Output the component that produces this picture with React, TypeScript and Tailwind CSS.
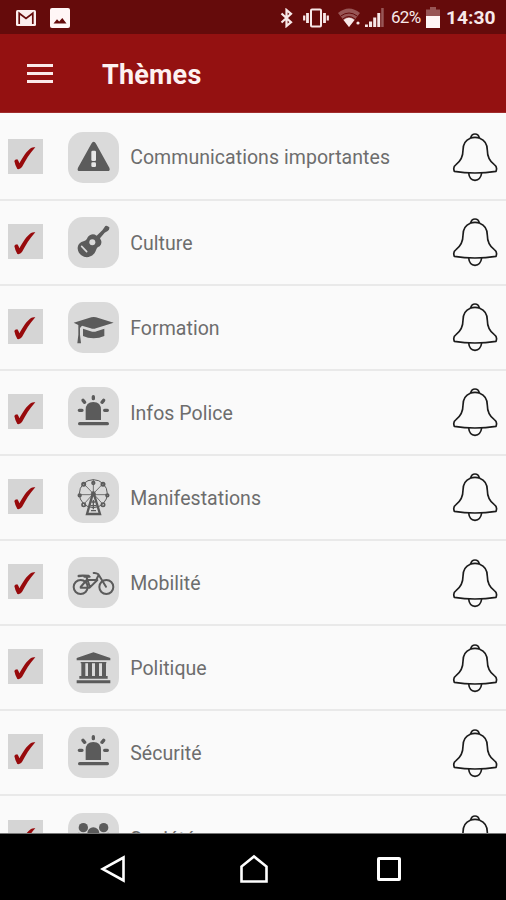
import type { ReactNode } from "react";
import { clsx } from "clsx";

function WarningIcon() {
  return (
    <>
      <path d="M77 29Q81 29 84 35L124 107Q128 117 119 117H35Q26 117 30 107L70 35Q73 29 77 29Z" />
      <rect x="70" y="56" width="14" height="31" rx="4" fill="#e6e6e6" />
      <rect x="70" y="91" width="14" height="14" rx="4" fill="#e6e6e6" />
    </>
  );
}

function GuitarIcon() {
  return (
    <>
      <path d="M112 27Q117 24 124 31Q125 39 119 42L110 47L96 64Q105 79 95 88C85 91 86 97 82 104C75 117 63 122 51 120C38 117 28 105 29 92C31 78 40 75 48 72C57 69 56 65 60 59C67 51 77 49 86 56L103 40Z" />
      <circle cx="73" cy="76" r="9" fill="#dadada" />
      <path d="M41 88L56 104" stroke="#dadada" strokeWidth="5" strokeLinecap="round" />
    </>
  );
}

function GraduationIcon() {
  return (
    <>
      <path d="M17 62L70 46Q77 44 84 46L137 62L84 79Q76 82 68 79L42 71L36 78V98L39 124H28L31 98V69Z" />
      <path d="M45 80L68 88Q77 91 86 88L109 80V102Q94 109 77 109Q59 109 45 102Z" />
    </>
  );
}

function SirenIcon() {
  return (
    <>
      <path d="M53 99V69Q53 45 76 45Q99 45 99 69V99Z" />
      <path
        d="M35 110H118M76 29V35M45 40L50 46M107 40L102 46M34 70H42M110 70H118"
        stroke="#5b5b5b"
        strokeWidth="10"
        strokeLinecap="round"
      />
    </>
  );
}

function FerrisWheelIcon() {
  return (
    <g fill="none" stroke="#5b5b5b" strokeWidth="3">
      <circle cx="76" cy="65" r="42" strokeWidth="3" />
      <path d="M76 22V65M34 68H118M46 34L76 65L106 34M48 96L76 65L104 96" strokeWidth="2.5" />
      <path d="M73 70L57 126H96L79 70Z" strokeWidth="7" />
      <path d="M67 101H85M70 90H82M69 116H84M76 84V112" strokeWidth="4" />
      <circle cx="76" cy="65" r="6" fill="#5b5b5b" />
      <g strokeWidth="5">
        <circle cx="76" cy="33" r="4" />
        <circle cx="47" cy="37" r="5" />
        <circle cx="105" cy="37" r="5" />
        <circle cx="35" cy="70" r="4" />
        <circle cx="118" cy="70" r="4" />
        <circle cx="47" cy="98" r="5" />
        <circle cx="105" cy="98" r="5" />
      </g>
    </g>
  );
}

function BikeIcon() {
  return (
    <g fill="none" stroke="#5b5b5b" strokeWidth="6" strokeLinecap="round" strokeLinejoin="round">
      <circle cx="38" cy="90" r="21" />
      <circle cx="115" cy="90" r="21" />
      <path d="M38 90L56 69H88L65 92H38M56 62L66 91M49 59H65M114 89L91 52Q85 47 77 48M92 54L86 66" />
      <path d="M32 57Q42 55 62 57" strokeWidth="7" />
    </g>
  );
}

function BuildingIcon() {
  return (
    <>
      <path d="M26 48L72 32Q76 30 81 32L127 48V55H26Z" />
      <path d="M40 62H52V102H40ZM60 62H72V102H60ZM81 62H93V102H81ZM102 62H114V102H102Z" />
      <path d="M38 60H115V64H38ZM34 102H119V110H34ZM26 115H127V124H26Z" />
    </>
  );
}

function PeopleIcon() {
  return (
    <>
      <circle cx="46" cy="44" r="14" />
      <circle cx="107" cy="44" r="14" />
      <circle cx="76" cy="61" r="18" />
      <path d="M27 88V66Q28 58 34 59Q44 66 55 61Q54 76 61 84V90H27ZM126 88V66Q125 58 119 59Q109 66 98 61Q99 76 92 84V90H126Z" />
      <path d="M44 118V104Q46 88 58 84Q76 96 95 84Q108 88 109 104V118Z" />
    </>
  );
}

const themes: { label: string; icon: ReactNode }[] = [
  { label: "Communications importantes", icon: <WarningIcon /> },
  { label: "Culture", icon: <GuitarIcon /> },
  { label: "Formation", icon: <GraduationIcon /> },
  { label: "Infos Police", icon: <SirenIcon /> },
  { label: "Manifestations", icon: <FerrisWheelIcon /> },
  { label: "Mobilité", icon: <BikeIcon /> },
  { label: "Politique", icon: <BuildingIcon /> },
  { label: "Sécurité", icon: <SirenIcon /> },
  { label: "Société", icon: <PeopleIcon /> },
];

function StatusBar() {
  return (
    <div className="flex h-[34px] shrink-0 items-center bg-[#650b0b] pl-4 pr-[11px] pt-px text-[#f8e9e9]">
      {/* Notifications */}
      <svg className="h-4 w-5" viewBox="0 0 20 16">
        <rect width="20" height="16" rx="1.5" fill="#fbeeee" />
        <path d="M3.2 14V3.2L10 8.4L16.8 3.2V14" fill="none" stroke="#650b0b" strokeWidth="1.7" />
      </svg>
      <svg className="ml-[14px] h-5 w-5" viewBox="0 0 20 20">
        <rect width="20" height="20" rx="2" fill="#fff6f6" />
        <path d="M3.5 15.5L7 11.3L9.2 13.4L12.3 10L16.5 15.5Z" fill="#650b0b" />
      </svg>

      {/* System state */}
      <svg className="ml-auto h-5 w-[13px]" viewBox="0 0 13 20" fill="none" stroke="currentColor" strokeWidth="2.2">
        <path d="M1.5 5.5L11 14.2L6.5 18V2L11 5.8L1.5 14.5" />
      </svg>
      <svg className="ml-[10px] h-5 w-[26px]" viewBox="0 0 26 20" fill="none" stroke="currentColor">
        <rect x="8" y="1.5" width="10" height="17" rx="1" strokeWidth="2" />
        <path d="M4.5 5V15M21.5 5V15" strokeWidth="2.8" />
        <path d="M1.2 7.5V12.5M24.8 7.5V12.5" strokeWidth="2.2" />
      </svg>
      <svg className="ml-[9px] h-5 w-[23px]" viewBox="0 0 23 20">
        <path d="M0 5Q11 -4 22 5L11 19Z" fill="#985656" />
        <path d="M2.8 8Q11 2 19.2 8M4.8 11Q11 6 17 11" fill="none" stroke="#650b0b" strokeWidth="1" />
        <path d="M5.5 12Q11 7.5 16.5 12L11 19Z" fill="currentColor" />
        <circle cx="20" cy="15" r="1.6" fill="currentColor" />
      </svg>
      <svg className="ml-1 h-5 w-[19px]" viewBox="0 0 19 20" fill="currentColor">
        <path d="M0 16.5H2.9V19H0ZM4 13.5H7.1V19H4ZM8.2 9.5H11.2V19H8.2ZM12.3 5H15.2V19H12.3Z" />
        <path d="M16.2 0H18.7V19H16.2Z" fill="#985656" />
      </svg>
      <span className="ml-[7px] w-[31px] pt-px text-[17px] tracking-[-0.7px]">62%</span>
      <svg className="ml-1 h-[21px] w-[14px]" viewBox="0 0 14 21">
        <path d="M0 2.5H4V0H10V2.5H14V9H0Z" fill="#985656" />
        <path d="M0 9H14V21H0Z" fill="#fff6f6" />
      </svg>
      <span className="ml-[6px] w-[49px] pt-[2px] text-[19.2px] font-bold">14:30</span>
    </div>
  );
}

function Bell() {
  return (
    <svg className="h-[50px] w-[46px]" viewBox="36 61 138 150" fill="none" stroke="#1c1c1c" strokeWidth="5">
      <path d="M91 80C75 86 69 98 69 116C69 139 60 150 48 159C40 164 40 171 43 179Q73 184 105 184Q137 184 168 179C171 171 171 164 163 159C150 150 142 139 142 116C142 98 135 86 119 80" />
      <path d="M90 80Q105 74 120 80M92 78Q95 67 105 67Q115 67 118 78" />
      <path d="M86 184Q88 205 105 206Q122 205 125 184" />
    </svg>
  );
}

function ThemeRow({ label, icon, last }: { label: string; icon: ReactNode; last: boolean }) {
  return (
    <li
      className={clsx(
        "flex h-[85.1px] items-center pl-[7.6px] pr-[8px]",
        !last && "border-b-2 border-[#e9e9e9]"
      )}
    >
      <svg className="mb-[2px] h-[35px] w-[35px] bg-[#d5d5d5]" viewBox="0 0 105 105">
        <path
          d="M19 66Q20 61 28 61Q32 65 34 73C44 54 57 35 69 27Q74 24 82 25C65 43 53 64 42 84Q36 92 28 90Q21 78 19 66Z"
          fill="#970a0c"
        />
      </svg>
      <svg className="ml-[25.6px] h-[51px] w-[51px] rounded-[15px] bg-[#dadada]" viewBox="0 0 153 153" fill="#5b5b5b">
        {icon}
      </svg>
      <span className="ml-[11px] pt-[2px] text-[19.5px] tracking-[0.05px] text-[#6d6d6d]">{label}</span>
      <span className="ml-auto">
        <Bell />
      </span>
    </li>
  );
}

export default function App() {
  return (
    <div className="flex h-[900px] w-[506px] flex-col overflow-hidden bg-[#fafafa] font-['Roboto',sans-serif]">
      <StatusBar />

      <header className="flex h-[79px] shrink-0 items-center border-b border-[#a02c2c] bg-[#941111] pl-[27px] pt-1">
        <div className="flex w-[26px] flex-col gap-[5px] pb-1">
          <span className="h-[3px] bg-[#fbeaea]" />
          <span className="h-[3px] bg-[#fbeaea]" />
          <span className="h-[3px] bg-[#fbeaea]" />
        </div>
        <h1 className="ml-[49px] pt-px text-[27px] font-bold tracking-[0.2px] text-[#fdf1f1]">Thèmes</h1>
      </header>

      <ul className="min-h-0 flex-1 overflow-hidden pt-[2.5px]">
        {themes.map((theme, i) => (
          <ThemeRow key={theme.label} {...theme} last={i === themes.length - 1} />
        ))}
      </ul>

      {/* Android navigation */}
      <nav className="flex h-[67px] shrink-0 items-center border-t border-[#777] bg-black pl-[100px] pt-[3px]">
        <svg className="h-[28px] w-[26px]" viewBox="0 0 26 28" fill="none" stroke="#fff" strokeWidth="2.6">
          <path d="M23.5 2.5V25.5L2.5 14Z" />
        </svg>
        <svg className="ml-[113px] h-[30px] w-[30px]" viewBox="0 0 30 30" fill="none" stroke="#fff" strokeWidth="2.6">
          <path d="M2.5 27.5V12.5L15 2.5L27.5 12.5V27.5Z" />
        </svg>
        <span className="ml-[108px] size-6 rounded-[2px] border-[3px] border-white" />
      </nav>
    </div>
  );
}
